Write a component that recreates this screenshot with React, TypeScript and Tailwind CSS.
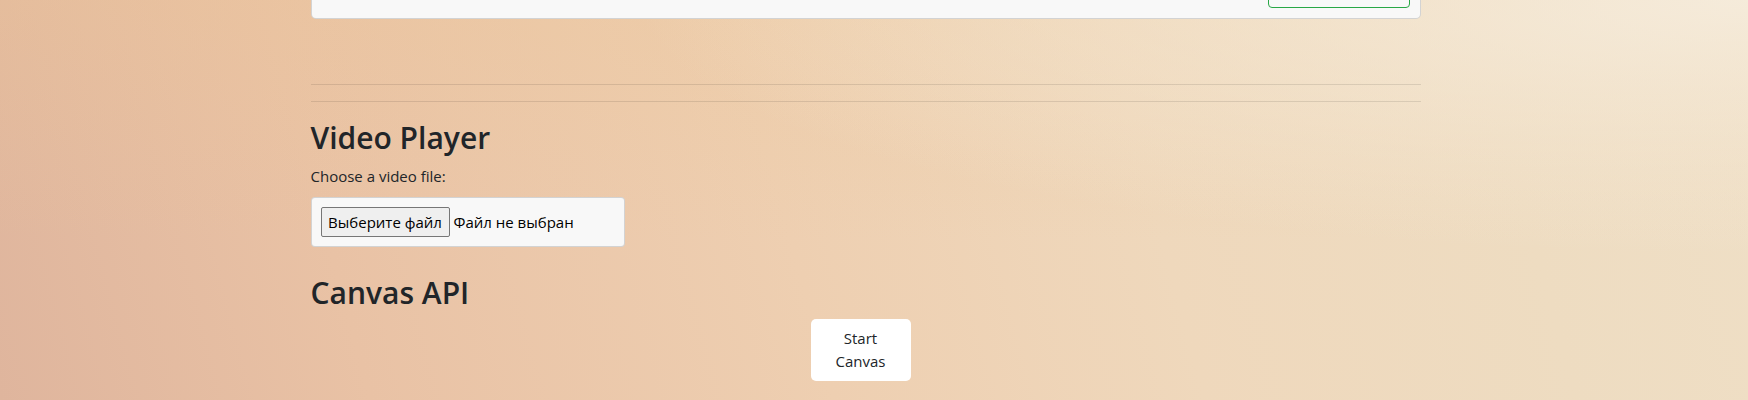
import React from 'react';

function FakeFileInput() {
  return (
    <div className="mt-[9px] flex h-[50px] w-[314px] items-center rounded-[4px] border border-black/15 bg-[#f8f8f8] px-[9px]">
      <span className="flex h-[30px] w-[129px] items-center justify-center rounded-[2px] border border-[#767676] bg-[#efefef] text-[15px] text-black">
        Выберите файл
      </span>
      <span className="ml-[4px] text-[15px] text-black">Файл не выбран</span>
    </div>
  );
}

export default function App() {
  return (
    <div
      className="h-[400px] overflow-hidden bg-[radial-gradient(ellipse_at_100%_0%,rgba(246,237,222,0.9)_0%,rgba(246,237,222,0)_45%),linear-gradient(to_bottom,rgba(236,198,150,0.3),rgba(236,198,150,0)_60%),linear-gradient(75deg,#dfb59d_0%,#e9c2a5_20%,#eecfb1_45%,#efd8bc_65%,#eedcc1_85%,#efdfc6_100%)] text-[#212529]"
      style={{ fontFamily: '"Segoe UI", "Open Sans", "Noto Sans", sans-serif' }}
    >
      <div className="pr-[17px]">
        <div className="mx-auto w-[1110px]">
          {/* Previous section card, cut off at the top */}
          <div className="-mt-[41px] flex h-[60px] items-end justify-end rounded-[5px] border border-black/15 bg-[#f8f8f8] pb-[10px] pr-[10px]">
            <div className="h-[38px] w-[142px] rounded-[4px] border border-[#28a745]" />
          </div>

          <hr className="mt-[65px] border-t border-black/10" />
          <hr className="mt-[16px] border-t border-black/10" />

          {/* Video Player */}
          <h2 className="mt-[17px] text-[30px] font-semibold leading-[38px]">Video Player</h2>
          <label className="mt-[7px] block text-[15px] leading-[24px]">Choose a video file:</label>
          <FakeFileInput />

          {/* Canvas API */}
          <h2 className="mt-[27px] text-[30px] font-semibold leading-[38px]">Canvas API</h2>
          <button className="ml-[500px] mt-[7px] block h-[62px] w-[100px] rounded-[5px] bg-white px-[20px] text-center text-[15px] leading-[23px]">
            Start Canvas
          </button>
        </div>
      </div>
    </div>
  );
}
